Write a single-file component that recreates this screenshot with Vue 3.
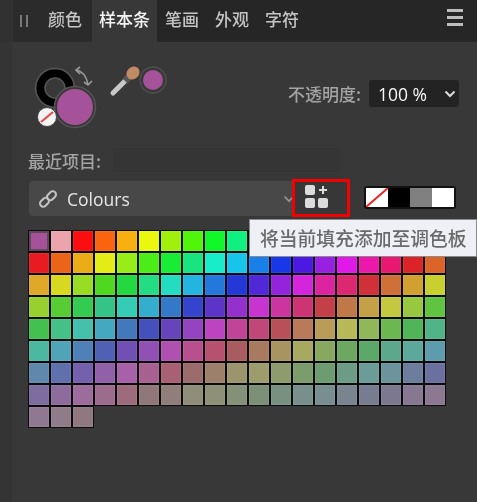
<script setup>
const tabs = ['颜色', '样本条', '笔画', '外观', '字符']
const colors = [
  '#a6529a','#eba4ae','#fb0d10','#fa6410','#f8b010','#eaf810','#a0f00c','#50f50a','#10f82a','#10f080','#10f0d0','#10c8f0','#1080f0','#1030f0','#5010f0','#a010f0','#f010e8','#f010a8','#f01060',
  '#e81c20','#ec6418','#ecac18','#e4ec18','#98ec18','#4cec18','#18ec34','#18e480','#18ecc8','#18c4ec','#1880e8','#1838e8','#4c18e4','#9820e0','#e018e8','#ec18ac','#e81870','#dc2428','#dc6428',
  '#e0a828','#d8d820','#98dc24','#50d820','#24d840','#24dc84','#24dcc0','#24b4e0','#2478dc','#2438d8','#5028d8','#9424dc','#d424dc','#dc24a0','#dc2870','#d03038','#d07038','#d0a030','#c8d030',
  '#98d030','#58cc34','#34cc50','#34c488','#34ccb4','#34aecc','#3478c8','#3444cc','#5c34c8','#9430cc','#c834d0','#cc34a0','#cc3474','#c44048','#c07848','#c4a048','#c4c840','#98c840','#60c440',
  '#44c050','#44c088','#44c0ac','#44a8c0','#4478bc','#4450bc','#6844bc','#9444c0','#bc44c0','#c04498','#c04878','#b85058','#b87a58','#b89c58','#b8b858','#90b858','#6cb850','#50b458','#50b488',
  '#4cb8a0','#50a4b8','#5080b8','#5060b4','#7050b4','#9050b4','#b050b0','#b85090','#b85070','#a85c60','#a87a60','#a89460','#a8a860','#88a860','#6ca860','#5ca868','#5ca88c','#5ca89c','#5c9cac',
  '#6088ac','#6070ac','#7460ac','#9060a8','#a860a8','#a86090','#a86074','#9c6c6c','#9c806c','#9c946c','#9c9c6c','#8c9c6c','#7c9c6c','#6c9c70','#6c9c88','#6c9c98','#6c949c','#6c7e9c','#6c70a0',
  '#7c6ca0','#8c6c9c','#9c6c9c','#9c6c8c','#9c6c7c','#90787a','#907e7a','#908e78','#8e9078','#849078','#7c9078','#789080','#78908c','#788e90','#788490','#787c90','#7c7890','#867890','#8c7890',
  '#907890','#907c88','#907880'
]
</script>

<template>
  <div class="panel">
    <div class="tabbar">
      <div class="tabs">
        <div class="grip"><i></i><i></i></div>
        <div v-for="(t, i) in tabs" :key="t" class="tab" :class="{ active: i === 1, first: i === 0 }">{{ t }}</div>
      </div>
      <div class="menu"><i></i><i></i><i></i></div>
    </div>

    <div class="top">
      <svg class="fill" width="140" height="70" viewBox="0 0 140 70">
        <circle cx="23" cy="23" r="14.5" fill="none" stroke="#000" stroke-width="8.5"/>
        <circle cx="23" cy="23" r="19.5" fill="none" stroke="#555" stroke-width="1.5"/>
        <circle cx="23" cy="23" r="10" fill="none" stroke="#555" stroke-width="1.5"/>
        <circle cx="43" cy="42" r="20.5" fill="#373737" stroke="#555" stroke-width="1.5"/>
        <circle cx="43" cy="42" r="18" fill="#a6529a"/>
        <circle cx="15" cy="52" r="9.5" fill="#f4f4f4" stroke="#444" stroke-width="1"/>
        <path d="M9 57 L21 47" stroke="#e84848" stroke-width="2.2"/>
        <path d="M44 5 C50 6 54 10 56 19" fill="none" stroke="#9a9a9a" stroke-width="1.6"/>
        <path d="M48 2 L44 5 L48 9 M52 17 L56 20 L60 16" fill="none" stroke="#9a9a9a" stroke-width="1.6"/>
        <path d="M81 28 L95 14" stroke="#c8c8c8" stroke-width="5" stroke-linecap="round"/>
        <path d="M93 16 L97 12" stroke="#555" stroke-width="7"/>
        <ellipse cx="101" cy="8" rx="6" ry="7" transform="rotate(45 101 8)" fill="#c08a62"/>
        <circle cx="121" cy="15" r="13" fill="none" stroke="#4e4e4e" stroke-width="1.5"/>
        <circle cx="121" cy="15" r="10" fill="#a6529a"/>
      </svg>
      <div class="opacity">
        <span class="label">不透明度:</span>
        <div class="select">
          <span>100 %</span>
          <svg width="12" height="8" viewBox="0 0 12 8"><path d="M1.5 1.5 L6 6 L10.5 1.5" fill="none" stroke="#ddd" stroke-width="2"/></svg>
        </div>
      </div>
    </div>

    <div class="recent">
      <span class="label recent-label">最近项目:</span>
      <div class="recent-field"></div>
    </div>

    <div class="controls">
      <div class="dropdown">
        <svg width="20" height="20" viewBox="0 0 20 20" fill="none" stroke="#c4c4c4" stroke-width="2">
          <rect x="1.5" y="10" width="10" height="6.5" rx="3.2" transform="rotate(-45 6.5 13.25)"/>
          <rect x="8.5" y="3.5" width="10" height="6.5" rx="3.2" transform="rotate(-45 13.5 6.75)"/>
        </svg>
        <span class="dd-text">Colours</span>
        <svg class="dd-chev" width="12" height="8" viewBox="0 0 12 8"><path d="M1.5 1.5 L6 6 L10.5 1.5" fill="none" stroke="#9a9a9a" stroke-width="1.6"/></svg>
      </div>
      <div class="add">
        <svg width="24" height="24" viewBox="0 0 24 24">
          <rect x="0" y="0" width="10" height="10" rx="2" fill="#dcdcdc"/>
          <rect x="0" y="13" width="10" height="10" rx="2" fill="#dcdcdc"/>
          <rect x="13" y="13" width="10" height="10" rx="2" fill="#dcdcdc"/>
          <path d="M18 1 V9 M14 5 H22" stroke="#dcdcdc" stroke-width="2"/>
        </svg>
      </div>
      <div class="quick">
        <span class="q none"><svg width="22" height="19" viewBox="0 0 22 19"><path d="M0 19 L22 0" stroke="#f02020" stroke-width="2"/></svg></span>
        <span class="q black"></span>
        <span class="q grey"></span>
        <span class="q white"></span>
      </div>
    </div>

    <div class="grid">
      <div v-for="(c, i) in colors" :key="i" class="cell" :class="{ selected: i === 0 }" :style="{ background: c }"></div>
    </div>

    <div class="tooltip">将当前填充添加至调色板</div>
  </div>
</template>

<style scoped>
.panel {
  position: relative;
  width: 477px;
  height: 502px;
  overflow: hidden;
  background: linear-gradient(90deg, #343434 12px, #383838 12px);
  font-family: "Noto Sans CJK SC", "Noto Sans", sans-serif;
  color: #b4b4b4;
  filter: blur(0.4px);
}
.tabbar {
  height: 42px;
  display: flex;
  justify-content: space-between;
  background: linear-gradient(90deg, #313131 13px, #262626 13px);
}
.tabs { display: flex; margin-left: 13px; }
.grip {
  width: 22px;
  display: flex;
  gap: 4px;
  justify-content: center;
  align-items: center;
  background: #2b2b2b;
}
.grip i { width: 2px; height: 12px; background: #7a7a7a; }
.tab {
  padding: 0 8px;
  font-size: 17px;
  font-weight: 500;
  line-height: 37px;
  color: #c4c4c4;
}
.tab.first { background: #2b2b2b; padding: 0 10px 0 13px; }
.tab.active { background: #383838; color: #f4f4f4; padding: 0 7px; }
.menu {
  width: 16px;
  margin: 9px 14px 0 0;
  display: flex;
  flex-direction: column;
  gap: 4px;
}
.menu i { height: 3px; background: #bdbdbd; }

.top {
  display: flex;
  align-items: flex-start;
  justify-content: space-between;
  padding: 23px 18px 0 32px;
  height: 83px;
  box-sizing: border-box;
}
.fill { flex: none; }
.opacity {
  display: flex;
  align-items: center;
  gap: 8px;
  margin-top: 15px;
}
.label { font-size: 17px; font-weight: 500; color: #a4a4a4; }
.select {
  width: 90px;
  height: 27px;
  box-sizing: border-box;
  display: flex;
  align-items: center;
  justify-content: space-between;
  padding: 0 3px 0 9px;
  background: #232323;
  border-radius: 3px;
  color: #f8f8f8;
  font-family: "Open Sans", sans-serif;
  font-size: 17.5px;
  font-weight: 500;
}
.recent {
  display: flex;
  align-items: center;
  gap: 13px;
  padding-left: 28px;
  margin-top: 23px;
  height: 24px;
}
.recent-label { width: 72px; white-space: nowrap; }
.recent-field { width: 227px; height: 24px; background: #353535; }

.controls {
  display: flex;
  align-items: flex-start;
  margin-top: 7px;
  padding-left: 29px;
  height: 38px;
}
.dropdown {
  width: 271px;
  height: 35px;
  margin-top: 2px;
  box-sizing: border-box;
  display: flex;
  align-items: center;
  padding: 0 5px 0 9px;
  background: #484848;
  border-radius: 4px 0 0 4px;
  color: #e6e6e6;
  font-family: "Open Sans", sans-serif;
  font-size: 17.5px;
  font-weight: 500;
}
.dd-text { margin-left: 9px; }
.dd-chev { margin-left: auto; }
.add {
  width: 58px;
  height: 38px;
  margin-left: -8px;
  box-sizing: border-box;
  border: 3.5px solid #f50000;
  padding: 3px 0 0 10px;
  background: #373737;
  position: relative;
}
.quick {
  display: flex;
  align-self: flex-start;
  margin: 7px 0 0 14px;
  border: 2px solid #111;
  border-radius: 3px;
  background: #111;
}
.q { width: 22px; height: 19px; display: block; }
.q svg { display: block; }
.none, .white { background: #fff; }
.black { background: #000; }
.grey { background: #808080; }

.grid {
  display: grid;
  grid-template-columns: repeat(19, 22px);
  grid-auto-rows: 22px;
  margin: 13px 0 0 28px;
}
.cell {
  box-sizing: border-box;
  border: 1px solid #0a0a0a;
  box-shadow: inset 0 0 0 1px rgba(255, 255, 255, 0.07);
}
.cell.selected {
  box-shadow: inset 0 0 0 2px #5f4a5c;
}
.tooltip {
  position: absolute;
  left: 249px;
  top: 219px;
  width: 228px;
  height: 38px;
  box-sizing: border-box;
  padding-left: 10px;
  background: #eef0f6;
  border: 1px solid #8a8a8a;
  color: #6a6a6a;
  font-size: 18.8px;
  font-weight: 500;
  line-height: 36px;
  white-space: nowrap;
}
</style>
